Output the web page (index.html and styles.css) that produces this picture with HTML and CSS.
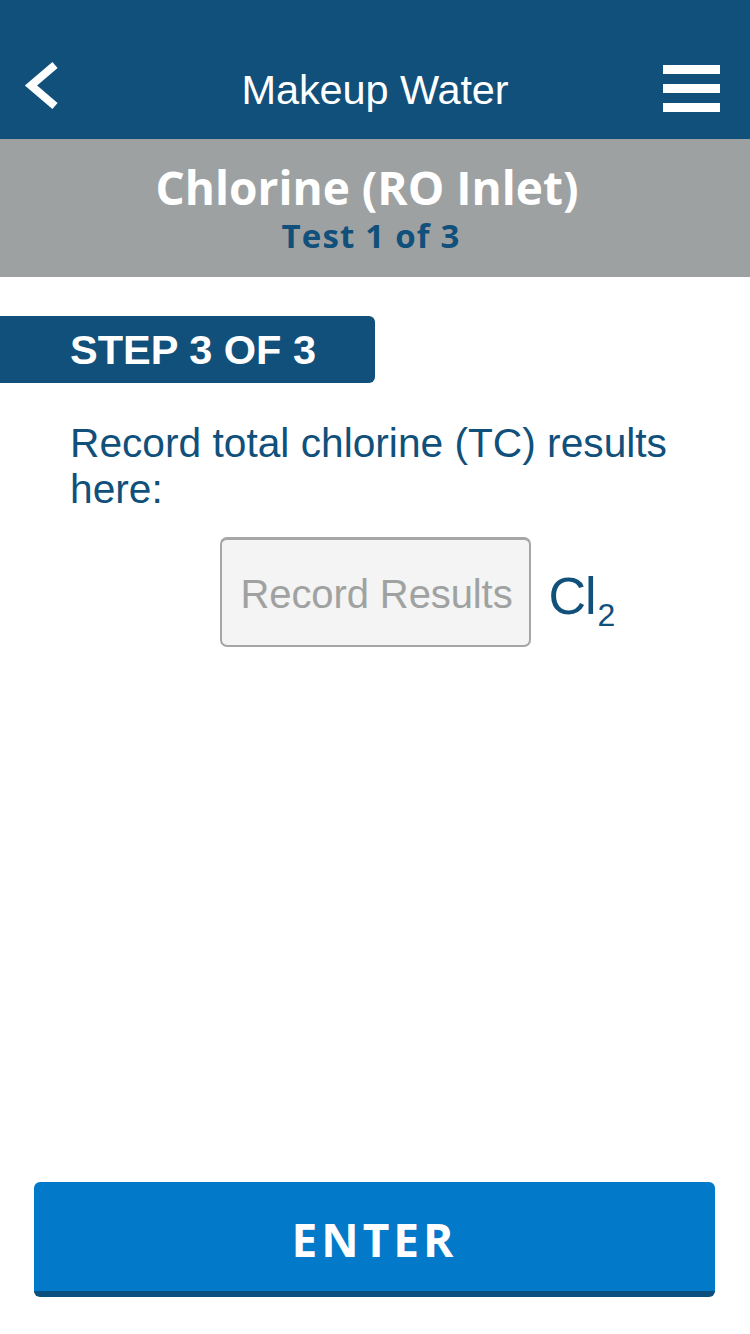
FILE: index.html
```html
<!DOCTYPE html>
<html>
<head>
<meta charset="utf-8">
<link rel="stylesheet" href="styles.css">
</head>
<body>
<div class="screen">
  <header class="topbar">
    <button class="icon-btn back" aria-label="Back">
      <svg width="44" height="50" viewBox="0 0 44 50"><polyline points="32,4 8,24.5 32,45" fill="none" stroke="#fff" stroke-width="8" stroke-linejoin="miter"/></svg>
    </button>
    <h1 class="title">Makeup Water</h1>
    <button class="icon-btn menu" aria-label="Menu">
      <span class="bar"></span><span class="bar"></span><span class="bar"></span>
    </button>
  </header>
  <section class="subheader">
    <div class="test-name">Chlorine (RO Inlet)</div>
    <div class="test-count">Test 1 of 3</div>
  </section>
  <main class="content">
    <div class="step-badge">STEP 3 OF 3</div>
    <p class="instruction">Record total chlorine (TC) results here:</p>
    <div class="result-row">
      <span></span>
      <input class="result-input" type="text" placeholder="Record Results">
      <span class="unit">Cl<sub>2</sub></span>
    </div>
  </main>
  <footer class="footer">
    <button class="enter-btn">ENTER</button>
  </footer>
</div>
</body>
</html>
```
FILE: styles.css
```css
html, body {
  margin: 0;
  padding: 0;
  background: #fff;
}
.screen {
  width: 750px;
  height: 1334px;
  display: flex;
  flex-direction: column;
  font-family: "Liberation Sans", Arial, sans-serif;
  overflow: hidden;
}
.topbar {
  height: 139px;
  box-sizing: border-box;
  padding-top: 40px;
  background: #10507b;
  display: grid;
  grid-template-columns: 1fr auto 1fr;
  align-items: center;
}
.icon-btn {
  background: none;
  border: 0;
  padding: 0;
  margin: 0;
  display: flex;
}
.back {
  justify-self: start;
  width: 44px;
  height: 50px;
  margin-left: 23px;
  margin-top: -8px;
}
.title {
  margin: 0;
  color: #fff;
  font-weight: 400;
  font-size: 41.5px;
  letter-spacing: -0.1px;
  line-height: 1;
}
.menu {
  justify-self: end;
  flex-direction: column;
  gap: 10px;
  width: 57px;
  margin-right: 30px;
  margin-top: -3px;
}
.bar {
  display: block;
  width: 57px;
  height: 9px;
  background: #fff;
}
.subheader {
  height: 138px;
  background: #9ea1a2;
  display: flex;
  flex-direction: column;
  align-items: center;
  justify-content: center;
  box-sizing: border-box;
  padding-top: 2px;
}
.test-name {
  font-family: "Open Sans", sans-serif;
  font-weight: 700;
  font-size: 46px;
  line-height: 46px;
  color: #fff;
  margin-left: -16px;
}
.test-count {
  font-family: "Open Sans", sans-serif;
  font-weight: 700;
  font-size: 33px;
  line-height: 36px;
  margin-top: 8px;
  letter-spacing: 1.2px;
  color: #10507b;
  margin-left: -8px;
}
.content {
  flex: 1;
  display: flex;
  flex-direction: column;
}
.step-badge {
  margin-top: 39px;
  width: 375px;
  height: 67px;
  box-sizing: border-box;
  padding-left: 70px;
  background: #10507b;
  border-radius: 0 6px 6px 0;
  color: #fff;
  font-weight: 700;
  font-size: 41.5px;
  letter-spacing: 0;
  display: flex;
  align-items: center;
}
.instruction {
  margin: 37px 40px 0 70px;
  color: #10507b;
  font-size: 40.7px;
  line-height: 46px;
}
.result-row {
  margin-top: 25px;
  display: grid;
  grid-template-columns: 1fr 311px 1fr;
  align-items: center;
}
.result-input {
  width: 311px;
  height: 110px;
  box-sizing: border-box;
  margin: 0;
  padding: 4px 0 0 19px;
  border: 2px solid #a5a7a6;
  border-top-width: 3px;
  border-radius: 7px;
  background: #f3f4f3;
  font-family: "Liberation Sans", Arial, sans-serif;
  font-size: 40px;
  letter-spacing: -0.1px;
  color: #333;
  outline: none;
}
.result-input::placeholder {
  color: #a0a2a1;
}
.unit {
  margin-left: 18px;
  margin-top: 8px;
  color: #10507b;
  font-size: 52px;
  line-height: 1;
  letter-spacing: -1px;
}
.unit sub {
  font-size: 32px;
  vertical-align: -12px;
  line-height: 0;
  letter-spacing: 0;
  margin-left: 2px;
}
.footer {
  padding: 0 35px 37px 34px;
}
.enter-btn {
  width: 100%;
  height: 115px;
  margin: 0;
  padding: 4px 0 0 0;
  border: 0;
  border-bottom: 6px solid #0b4f7f;
  border-radius: 6px;
  background: #037ac9;
  color: #fff;
  font-family: "Open Sans", sans-serif;
  font-weight: 700;
  font-size: 46px;
  letter-spacing: 4px;
  display: flex;
  align-items: center;
  justify-content: center;
}
```
